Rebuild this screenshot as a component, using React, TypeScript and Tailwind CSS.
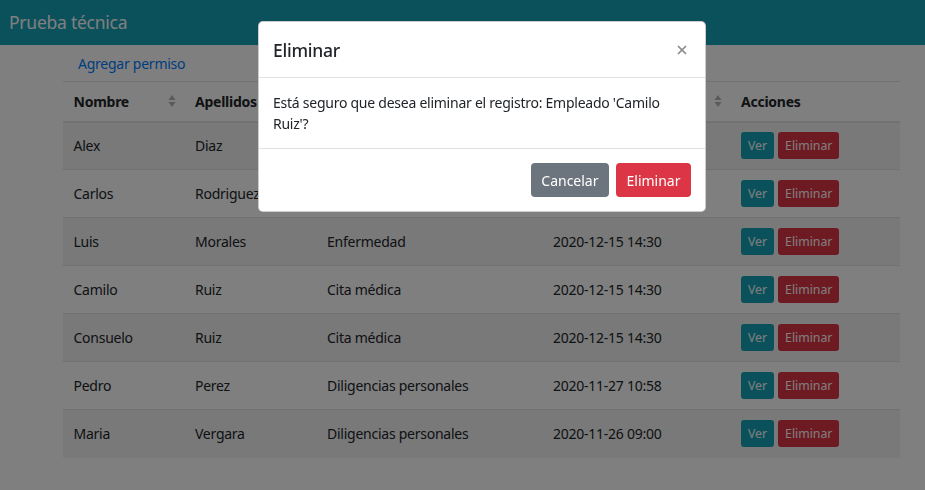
import { X } from "lucide-react";

type Permiso = {
  nombre: string;
  apellidos: string;
  tipo: string;
  fecha: string;
};

const permisos: Permiso[] = [
  { nombre: "Alex", apellidos: "Diaz", tipo: "Vacaciones", fecha: "2020-12-16 08:00" },
  { nombre: "Carlos", apellidos: "Rodriguez", tipo: "Cita médica", fecha: "2020-12-15 16:00" },
  { nombre: "Luis", apellidos: "Morales", tipo: "Enfermedad", fecha: "2020-12-15 14:30" },
  { nombre: "Camilo", apellidos: "Ruiz", tipo: "Cita médica", fecha: "2020-12-15 14:30" },
  { nombre: "Consuelo", apellidos: "Ruiz", tipo: "Cita médica", fecha: "2020-12-15 14:30" },
  { nombre: "Pedro", apellidos: "Perez", tipo: "Diligencias personales", fecha: "2020-11-27 10:58" },
  { nombre: "Maria", apellidos: "Vergara", tipo: "Diligencias personales", fecha: "2020-11-26 09:00" },
];

function SortIcon() {
  return (
    <svg width="8" height="14" viewBox="0 0 8 14" className="shrink-0 -mr-[2px]">
      <path d="M4 1 L7.5 6 H0.5 Z" fill="#b5b5b5" />
      <path d="M4 13 L7.5 8 H0.5 Z" fill="#b5b5b5" />
    </svg>
  );
}

function HeaderCell({ label, sortable = true }: { label: string; sortable?: boolean }) {
  return (
    <th className="px-[10.5px] h-[40px] text-left font-bold align-middle">
      <div className="flex items-center justify-between">
        <span>{label}</span>
        {sortable && <SortIcon />}
      </div>
    </th>
  );
}

export default function App() {
  return (
    <div
      className="min-h-[490px] bg-white text-[14px] leading-[21px] tracking-[-0.25px] text-[#212529]"
      style={{ fontFamily: '"Noto Sans", "Open Sans", sans-serif' }}
    >
      <header className="h-[45px] bg-[#17a2b8] flex items-center pl-[9px]">
        <span className="text-white text-[17.5px]">Prueba técnica</span>
      </header>

      <main className="pl-[63px] pr-[25px]">
        <div className="pl-[15px] pt-[8px] pb-[7px]">
          <a href="#" className="text-[#007bff]">
            Agregar permiso
          </a>
        </div>

        <table className="w-[837px] table-fixed border-collapse">
          <colgroup>
            <col className="w-[121.5px]" />
            <col className="w-[132px]" />
            <col className="w-[226px]" />
            <col className="w-[188px]" />
            <col className="w-[169.5px]" />
          </colgroup>
          <thead>
            <tr className="border-t border-[#dee2e6] border-b-2">
              <HeaderCell label="Nombre" />
              <HeaderCell label="Apellidos" />
              <HeaderCell label="Tipo de permiso" />
              <HeaderCell label="Fecha" />
              <HeaderCell label="Acciones" sortable={false} />
            </tr>
          </thead>
          <tbody>
            {permisos.map((p, i) => (
              <tr
                key={p.nombre}
                className={`h-[48px] border-t border-[#dee2e6] ${i % 2 === 0 ? "bg-[#f2f2f2]" : ""}`}
              >
                <td className="px-[10.5px]">{p.nombre}</td>
                <td className="px-[10.5px]">{p.apellidos}</td>
                <td className="px-[10.5px]">{p.tipo}</td>
                <td className="px-[10.5px]">{p.fecha}</td>
                <td className="px-[10.5px]">
                  <div className="flex gap-[4px] tracking-normal">
                    <button className="h-[27px] px-[7px] rounded-[3px] bg-[#17a2b8] text-white text-[12.25px] leading-[18px]">
                      Ver
                    </button>
                    <button className="h-[27px] px-[7px] rounded-[3px] bg-[#dc3545] text-white text-[12.25px] leading-[18px]">
                      Eliminar
                    </button>
                  </div>
                </td>
              </tr>
            ))}
          </tbody>
        </table>
      </main>

      {/* modal */}
      <div className="fixed inset-0 bg-black/50">
        <div className="mt-[21px] ml-[258px] w-[448px] bg-white rounded-[5px] border border-black/20">
          <div className="h-[56px] flex items-center justify-between px-[14px] pt-[1px] border-b border-[#dee2e6]">
            <h5 className="text-[17.5px] font-medium leading-[26px]">Eliminar</h5>
            <X size={14} strokeWidth={3} className="text-[#8a8a8a] mr-[2px]" />
          </div>
          <div className="p-[14px]">
            Está seguro que desea eliminar el registro: Empleado 'Camilo Ruiz'?
          </div>
          <div className="flex justify-end gap-[7px] px-[14px] py-[14px] border-t border-[#dee2e6] tracking-normal">
            <button className="h-[34px] px-[10.5px] rounded-[4px] bg-[#6c757d] text-white">Cancelar</button>
            <button className="h-[34px] px-[10.5px] rounded-[4px] bg-[#dc3545] text-white">Eliminar</button>
          </div>
        </div>
      </div>
    </div>
  );
}
